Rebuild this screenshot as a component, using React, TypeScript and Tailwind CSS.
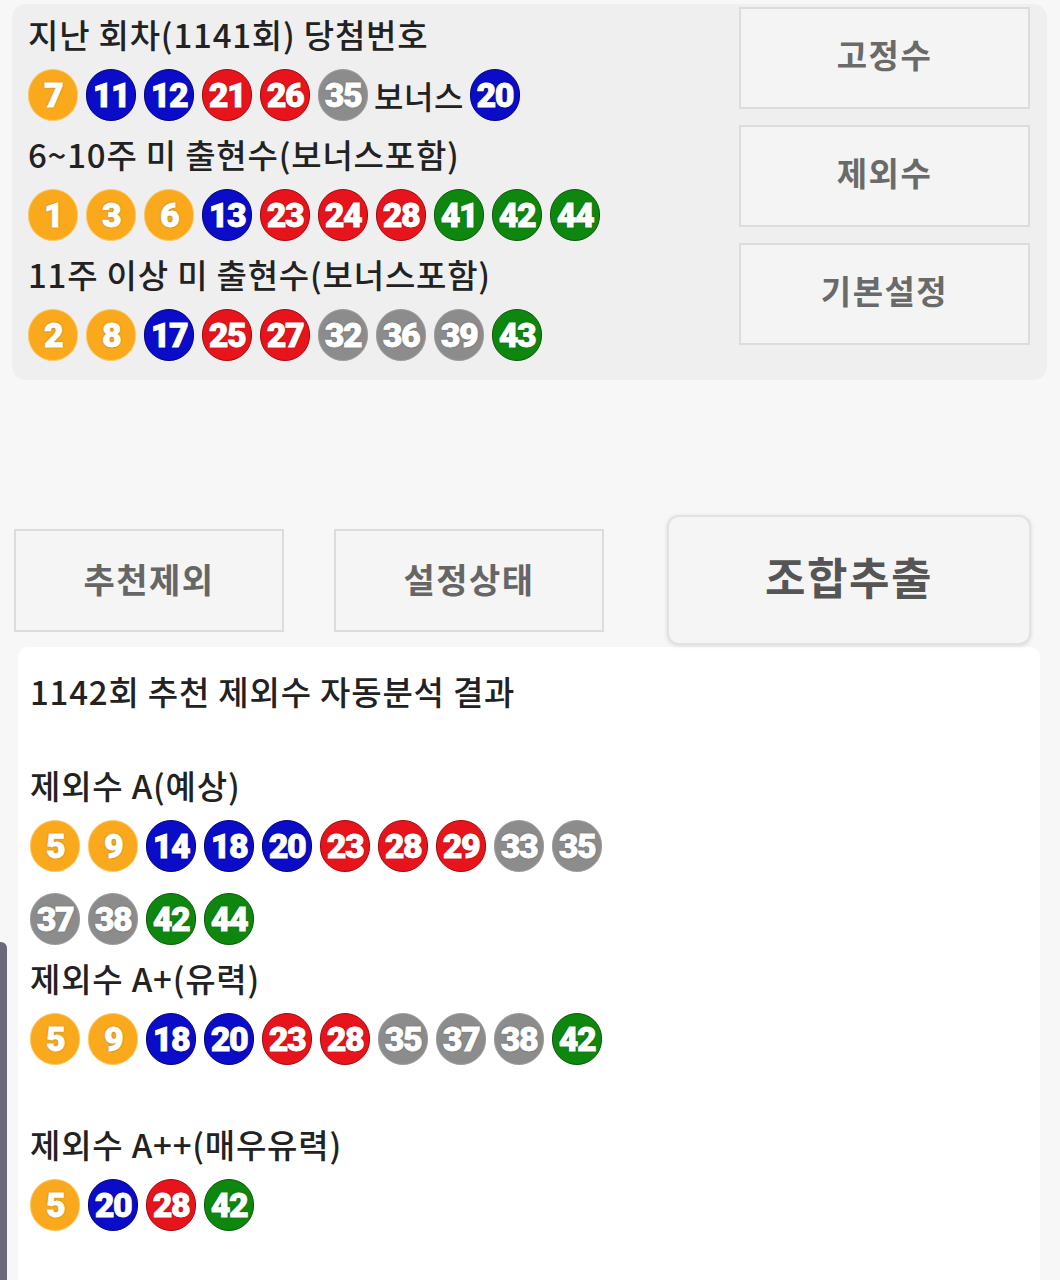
import React from "react";

const KR = { fontFamily: '"Noto Sans CJK KR", "Noto Sans", sans-serif' };

type C = "y" | "b" | "r" | "g" | "k";

function color(n: number): C {
  if (n <= 10) return "y";
  if (n <= 20) return "b";
  if (n <= 30) return "r";
  if (n <= 40) return "k";
  return "g";
}

const ballCls: Record<C, string> = {
  y: "bg-[#f9a91b] border-[#fcc866]",
  b: "bg-[#0a0cc8] border-[#05057a]",
  r: "bg-[#e8141c] border-[#a00a10]",
  k: "bg-[#8c8c8c] border-[#9e9e9e]",
  g: "bg-[#0e870e] border-[#0a5a0a]",
};

function Ball({ n }: { n: number }) {
  return (
    <div
      className={`w-[50px] h-[52px] rounded-full border-[1.5px] flex items-center justify-center shrink-0 ${ballCls[color(n)]}`}
    >
      <span
        className="text-white text-[34px] font-black tracking-[-1.5px] leading-none [-webkit-text-stroke:0.8px_white] [text-shadow:0_0_2px_rgba(0,0,0,0.6)]"
        style={{ fontFamily: 'Roboto, "Liberation Sans", sans-serif' }}
      >
        {n}
      </span>
    </div>
  );
}

function Row({ nums, children }: { nums: number[]; children?: React.ReactNode }) {
  return (
    <div className="h-[62px] flex items-center gap-[8px]">
      {nums.map((n, i) => (
        <Ball key={i} n={n} />
      ))}
      {children}
    </div>
  );
}

function Title({ children }: { children: React.ReactNode }) {
  return (
    <div
      className="h-[58px] flex items-center text-[33px] font-medium text-[#222] tracking-[0.8px]"
      style={KR}
    >
      {children}
    </div>
  );
}

function SideBtn({ label }: { label: string }) {
  return (
    <div
      className="h-[102px] bg-[#f4f4f4] border-2 border-[#dcdcdc] flex items-center justify-center text-[33px] font-bold text-[#6a6a6a] tracking-[1.5px] pb-[6px]"
      style={KR}
    >
      {label}
    </div>
  );
}

export default function App() {
  return (
    <div className="relative w-[1060px] h-[1280px] overflow-hidden bg-[#f7f7f7]" style={KR}>
      {/* top panel */}
      <div className="ml-[12px] mr-[13px] mt-[4px] rounded-[14px] bg-[#efefef] flex pt-[2px] pb-[14px]">
        <div className="flex-1 pl-[16px]">
          <Title>지난 회차(1141회) 당첨번호</Title>
          <Row nums={[7, 11, 12, 21, 26, 35]}>
            <span className="text-[32px] font-medium text-[#222] -mx-[2px] tracking-[0.5px]" style={KR}>
              보너스
            </span>
            <Ball n={20} />
          </Row>
          <Title>6~10주 미 출현수(보너스포함)</Title>
          <Row nums={[1, 3, 6, 13, 23, 24, 28, 41, 42, 44]} />
          <Title>11주 이상 미 출현수(보너스포함)</Title>
          <Row nums={[2, 8, 17, 25, 27, 32, 36, 39, 43]} />
        </div>
        <div className="w-[291px] mr-[17px] mt-[1px] flex flex-col gap-[16px]">
          <SideBtn label="고정수" />
          <SideBtn label="제외수" />
          <SideBtn label="기본설정" />
        </div>
      </div>

      {/* action buttons */}
      <div className="mt-[135px] flex items-center pl-[14px]">
        <div
          className="w-[270px] h-[103px] bg-[#f5f5f5] border-2 border-[#dcdcdc] flex items-center justify-center text-[34px] font-bold text-[#666] tracking-[1.5px] pb-[4px]"
          style={KR}
        >
          추천제외
        </div>
        <div
          className="ml-[50px] w-[270px] h-[103px] bg-[#f5f5f5] border-2 border-[#dcdcdc] flex items-center justify-center text-[34px] font-bold text-[#666] tracking-[1.5px] pb-[4px]"
          style={KR}
        >
          설정상태
        </div>
        <div
          className="ml-[63px] w-[364px] h-[130px] bg-[#f5f5f5] border-2 border-[#e2e2e2] rounded-[12px] shadow-[0_1px_4px_rgba(0,0,0,0.12)] flex items-center justify-center text-[44px] font-bold text-[#555] tracking-[1.5px] pb-[8px]"
          style={KR}
        >
          조합추출
        </div>
      </div>

      {/* result card */}
      <div className="mt-[2px] ml-[18px] mr-[20px] bg-white rounded-t-[10px] pt-[16px] pl-[12px] h-[700px]">
        <Title>1142회 추천 제외수 자동분석 결과</Title>
        <div className="h-[36px]" />
        <Title>제외수 A(예상)</Title>
        <div className="flex flex-col gap-[11px]">
          <Row nums={[5, 9, 14, 18, 20, 23, 28, 29, 33, 35]} />
          <Row nums={[37, 38, 42, 44]} />
        </div>
        <Title>제외수 A+(유력)</Title>
        <Row nums={[5, 9, 18, 20, 23, 28, 35, 37, 38, 42]} />
        <div className="h-[46px]" />
        <Title>제외수 A++(매우유력)</Title>
        <Row nums={[5, 20, 28, 42]} />
      </div>

      {/* device edge artifact */}
      <div className="absolute left-0 top-[942px] w-[7px] h-[340px] bg-[#6c6a78] rounded-tr-[6px]" />
    </div>
  );
}
